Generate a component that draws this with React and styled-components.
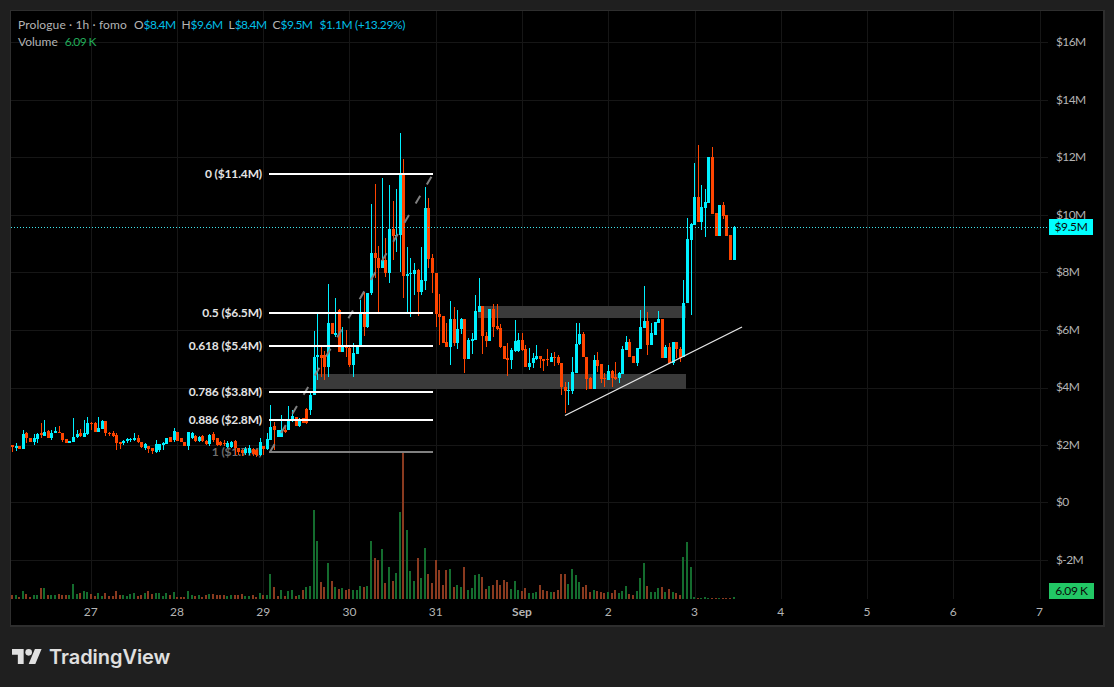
import React from "react";
import styled, { createGlobalStyle } from "styled-components";

const CYAN = "#00f0ff";
const RED = "#ff4500";
const VOL_UP = "#146c2e";
const VOL_DOWN = "#8a3a1f";
const FONT = `Lato, "Noto Sans", "Liberation Sans", sans-serif`;

const GlobalStyle = createGlobalStyle`
  html, body { margin: 0; padding: 0; background: #1f1f1f; }
  body { font-family: ${FONT}; overflow: hidden; }
`;

const Page = styled.div`
  width: 1114px;
  height: 687px;
  padding: 10px 0 0 10px;
  box-sizing: border-box;
  background: #1f1f1f;
  display: flex;
  flex-direction: column;
`;
const Frame = styled.div`
  width: 1095px;
  height: 617px;
  box-sizing: border-box;
  border: 1px solid #2e2e2e;
  border-right-width: 2px;
  border-bottom-width: 2px;
  background: #000;
  position: relative;
  display: flex;
  flex-direction: column;
`;
const ChartRow = styled.div`
  display: flex;
  height: 588px;
`;
const Pane = styled.div`
  position: relative;
  width: 1037px;
  height: 588px;
`;
const ChartSvg = styled.svg`
  display: block;
`;
const Legend = styled.div`
  position: absolute;
  left: 7px;
  top: 5px;
  font-size: 12px;
  line-height: 17px;
  color: #b4b4b4;
  white-space: nowrap;
`;
const LegendRow = styled.div`
  display: flex;
`;
const LegendTitle = styled.span`
  margin-right: 7px;
  letter-spacing: 0.12px;
`;
const Ohlc = styled.span`
  margin-right: 6px;
`;
const Cyan = styled.span`
  color: #00bfe6;
  letter-spacing: ${(p) => p.$spacing ?? -0.6}px;
`;
const Change = styled(Cyan)`
  margin-left: 1px;
`;
const VolumeValue = styled.span`
  color: #22ab5a;
  letter-spacing: -0.6px;
  margin-left: 7px;
`;
const PriceScale = styled.div`
  width: 55px;
  padding-top: 2px;
  display: flex;
  flex-direction: column;
  position: relative;
`;
const PriceTick = styled.div`
  height: 57.5px;
  flex: none;
  display: flex;
  align-items: center;
  padding-left: 8px;
  font-size: 12px;
  letter-spacing: -0.6px;
  color: #b4b4b4;
`;
const Badge = styled.div`
  position: absolute;
  left: 1px;
  top: ${(p) => p.$top}px;
  width: ${(p) => p.$w}px;
  height: 16px;
  background: ${(p) => p.$bg};
  color: #0a0a0a;
  font-size: 12px;
  line-height: 16px;
  letter-spacing: -0.4px;
  text-align: center;
`;
const TimeScale = styled.div`
  display: grid;
  grid-template-columns: repeat(12, 86.27px);
  padding-left: 36.5px;
  height: 26px;
  padding-bottom: 2px;
  box-sizing: border-box;
  align-items: center;
`;
const TimeTick = styled.div`
  text-align: center;
  font-size: 12px;
  color: #b4b4b4;
  font-weight: ${(p) => (p.$strong ? 700 : 400)};
`;
const Footer = styled.div`
  display: flex;
  align-items: center;
  gap: 7px;
  padding: 18px 0 0 2px;
  color: #e0e0e0;
`;
const LogoMark = styled.svg`
  display: block;
  margin-top: -1px;
`;
const Wordmark = styled.span`
  font-family: Inter, "Noto Sans", sans-serif;
  font-size: 20px;
  font-weight: 600;
  line-height: 24px;
  letter-spacing: -0.05px;
`;
const FibText = styled.text`
  font-family: ${FONT};
  font-size: 12px;
  font-weight: 700;
  letter-spacing: -0.15px;
  text-anchor: end;
  fill: ${(p) => p.$fill};
`;

/* left part, read in a 3x crop: [top, bottom, wickTop, wickBottom, signed volume] */
const z = (v) => 400 + v / 3;
const LEFT = [
  [135,142,135,155,-4],[138,145,128,152,4],[138,148,138,148,-2],[103,148,90,148,8],[100,113,95,128,-5],[113,127,113,127,-2],
  [113,127,103,135,4],[103,118,98,130,4],[98,104,70,115,-11],[96,107,60,107,11],[93,113,90,115,-4],[100,115,90,120,4],
  [93,98,80,100,4],[95,100,77,100,-5],[98,120,98,125,-4],[118,128,118,130,-4],[122,129,122,129,4],[110,125,55,125,15],
  [103,110,90,115,5],[100,108,88,110,-6],[100,110,60,112,8],[70,103,50,105,7],[70,73,65,90,-5],[70,95,65,95,-3],
  [85,95,50,95,6],[63,87,60,87,3],[63,100,63,108,-6],[98,102,95,108,-3],[100,108,93,112,-3],[105,130,100,150,-8],
  [127,133,127,147,-4],[122,130,120,135,4],[118,122,113,128,3],[117,120,115,125,5],[115,120,100,122,6],[115,127,105,128,-3],
  [125,140,125,145,-4],[133,145,130,150,6],[137,147,137,160,-8],[145,153,145,162,-5],[133,155,120,158,6],[133,150,133,155,6],
  [130,135,125,150,3],[113,132,113,133,6],[112,125,110,127,-4],[93,120,85,125,7],[97,122,97,122,-2],[115,125,115,125,-2],
  [125,138,125,138,-2],[97,137,95,150,8],[100,115,97,118,4],[108,122,105,125,-3],[110,122,108,125,4],[107,122,105,125,-2],
  [122,132,120,135,-4],[105,133,103,137,5],[103,120,95,125,-5],[115,135,115,137,-4],[125,135,122,137,-4],[128,133,120,137,-4],
  [128,142,122,145,3],[125,140,122,145,4],[122,145,120,165,-4],[145,155,145,165,-4],[150,160,147,168,-5],[148,160,140,165,3],
  [145,158,135,165,3],[148,163,145,168,-4],[150,165,148,170,-2],[125,165,115,168,6],[137,148,137,165,-4],[117,148,100,150,4],
].map(([t, b, wt, wb, v]) => ({ up: v > 0, t: z(t), b: z(b), wt: z(wt), wb: z(wb), v }));

/* from the jump at the 29th on: ["c"|"r", top, bottom, wickTop, wickBottom, signed volume] */
const MAIN = [
  ["c",427,440,405,440,25],["r",426,430,422,450,-12],["c",430,437,430,437,-3],["c",430,437,415,437,9],["r",430,432,427,433,-3],
  ["c",420,430,406,430,8],["c",416,421,410,422,9],["r",417,426,417,426,-3],["c",419,426,418,427,4],["r",418,423,418,423,-9],
  ["r",409,423,408,424,12],["c",395,410,393,415,13],["c",357,395,331,395,89],["c",355,357,312,380,58],["r",355,358,346,377,-17],
  ["r",355,367,351,380,-12],["c",323,367,284,377,36],["r",323,334,323,334,-18],["c",333,335,298,337,12],["r",310,352,309,352,-10],
  ["c",345,352,327,352,11],["r",345,348,330,357,-9],["r",348,365,345,367,-10],["c",353,365,343,377,9],["c",346,354,345,354,9],
  ["c",312,346,300,346,13],["r",312,327,292,336,-12],["c",293,327,293,328,13],["c",253,293,204,295,58],["r",253,258,184,278,-41],
  ["r",258,268,246,312,-39],["c",260,268,178,268,50],["r",260,273,238,277,-16],["c",229,273,185,283,32],["r",229,236,201,260,-18],
  ["c",235,236,189,252,26],["c",173,235,133,272,87],["r",173,276,159,298,-147],["c",274,276,247,313,69],["c",273,274,258,317,28],
  ["c",270,274,263,295,18],["r",270,292,269,316,-41],["c",280,292,247,295,21],["c",208,281,187,290,51],["r",208,259,198,268,-25],
  ["r",258,273,254,293,-16],["r",273,314,273,327,-39],["r",314,317,294,345,-29],["r",316,343,316,343,-14],["r",342,347,323,347,-29],
  ["c",319,347,301,365,30],["r",319,343,307,346,-12],["c",329,343,310,349,14],["c",319,329,318,334,12],["r",319,359,319,373,-32],
  ["c",340,359,338,359,9],["c",339,341,333,354,11],["c",311,340,295,340,24],["c",306,312,278,312,25],["r",306,336,306,354,-22],
  ["r",336,341,332,347,-10],["c",309,341,309,341,13],["r",309,327,304,337,-14],["r",326,329,304,330,-19],["r",328,347,324,348,-14],
  ["r",346,359,346,359,-19],["r",358,360,343,376,-17],["c",350,360,348,369,10],["c",341,351,320,352,18],["c",340,351,333,352,9],
  ["r",340,350,333,351,-8],["r",349,367,345,367,-11],["c",363,367,348,370,6],["c",358,363,353,368,6],["c",356,359,345,360,7],
  ["r",356,359,356,368,-14],["r",359,361,359,371,-9],["r",359,360,349,366,-8],["c",357,362,353,362,7],["r",357,358,352,366,-7],
  ["r",357,363,355,365,-9],["r",363,387,363,395,-25],["r",387,391,382,413,-25],["c",390,391,382,405,15],["c",372,391,357,394,30],
  ["c",344,373,323,373,24],["c",334,344,323,345,17],["r",334,357,332,357,-12],["r",357,379,357,390,-14],["r",378,389,377,389,-7],
  ["c",360,389,355,389,9],["r",360,366,352,372,-8],["r",364,379,364,383,-7],["r",378,379,373,387,-6],["c",371,380,365,380,7],
  ["r",371,378,370,387,-6],["r",377,379,362,380,-9],["c",373,378,372,383,6],["c",349,374,346,374,8],["c",342,350,336,350,13],
  ["r",342,357,339,357,-5],["r",356,363,356,363,-4],["c",348,363,348,366,8],["c",327,349,310,349,21],["c",321,328,286,328,36],
  ["r",321,345,312,355,-13],["c",333,345,323,345,7],["c",322,335,322,335,7],["c",319,323,311,323,11],["r",319,358,319,358,-12],
  ["c",347,358,345,358,7],["r",347,363,343,363,-10],["c",342,363,342,365,7],["r",342,349,342,358,-6],["r",349,358,347,362,-4],
  ["c",303,357,280,357,42],["c",239,303,218,303,57],["c",224,240,223,315,32],["c",197,225,163,225,2],["r",197,222,145,222,-1],
  ["c",207,222,185,230,1],["c",202,208,189,237,2],["c",157,203,157,203,1],["r",157,214,147,214,-1],["r",213,236,213,236,-1],
  ["c",205,236,205,236,1],["r",205,216,202,219,-1],["r",215,236,215,236,-1],["r",235,260,235,260,-1],["c",227,260,226,260,2],
].map(([k, t, b, wt, wb, v]) => ({ up: k === "c", t, b, wt, wb, v }));

const CANDLES = [...LEFT, ...MAIN];
const cx = (i) => 12 + i * 3.59;

const GRID_X = [91, 177, 263, 349, 436, 522, 608, 695, 781, 867, 953, 1040];
const GRID_Y = [42, 100, 157, 215, 272, 330, 388, 445, 502, 560];
const FIB = [
  { y: 174, label: "0 ($11.4M)" },
  { y: 313, label: "0.5 ($6.5M)" },
  { y: 346, label: "0.618 ($5.4M)" },
  { y: 392, label: "0.786 ($3.8M)" },
  { y: 420, label: "0.886 ($2.8M)" },
];
const PRICES = ["$16M", "$14M", "$12M", "$10M", "$8M", "$6M", "$4M", "$2M", "$0", "$-2M"];
const TIMES = ["27", "28", "29", "30", "31", "Sep", "2", "3", "4", "5", "6", "7"];

function Chart() {
  return (
    <ChartSvg width="1037" height="588" viewBox="11 11 1037 588">
      <g shapeRendering="crispEdges">
        {GRID_X.map((x) => (
          <rect key={x} x={x} y="11" width="1" height="588" fill="#161616" />
        ))}
        {GRID_Y.map((y) => (
          <rect key={y} x="11" y={y} width="1037" height="1" fill="#161616" />
        ))}
        <rect x="478" y="306" width="208" height="12" fill="#3a3a3a" />
        <rect x="315" y="374" width="371" height="15" fill="#3a3a3a" />
        {CANDLES.map((c, i) => (
          <rect
            key={i}
            x={Math.round(cx(i)) - 1}
            y={599 - Math.abs(c.v)}
            width="2"
            height={Math.abs(c.v)}
            fill={c.v > 0 ? VOL_UP : VOL_DOWN}
          />
        ))}
      </g>
      <FibText x="262" y="456" $fill="#6e6e6e">1 ($1.7M)</FibText>
      <g shapeRendering="crispEdges">
        {CANDLES.map((c, i) => {
          const col = c.up ? CYAN : RED;
          const x = Math.round(cx(i));
          return (
            <g key={i}>
              <rect x={x} y={c.wt} width="1" height={c.wb - c.wt} fill={col} />
              <rect x={x - 1} y={c.t} width="3" height={Math.max(1, c.b - c.t)} fill={col} />
            </g>
          );
        })}
      </g>
      <line x1="11" x2="1048" y1="227.5" y2="227.5" stroke="#3fe6ee" strokeDasharray="1 2" />
      <line x1="270" y1="452" x2="433" y2="174" stroke="#808080" strokeWidth="2" strokeDasharray="9 13.15" />
      <line x1="565" y1="415.5" x2="742" y2="327" stroke="#e6e6e6" strokeWidth="1.3" />
      <g shapeRendering="crispEdges">
        {FIB.map((f) => (
          <rect key={f.y} x="269" y={f.y - 1} width="164" height="2" fill="#fff" />
        ))}
        <rect x="269" y="451" width="164" height="2" fill="#808080" />
      </g>
      {FIB.map((f) => (
        <FibText key={f.y} x="262" y={f.y + 4} $fill="#e4e4e4">{f.label}</FibText>
      ))}
    </ChartSvg>
  );
}

function Logo() {
  return (
    <LogoMark width="30" height="15" viewBox="0 4 36 18" fill="#e0e0e0" aria-hidden="true">
      <path d="M14 22H7V11H0V4h14v18zM28 22h-8l7.5-18h8L28 22z" />
      <circle cx="20" cy="8" r="4" />
    </LogoMark>
  );
}

export default function App() {
  return (
    <Page>
      <GlobalStyle />
      <Frame>
        <ChartRow>
          <Pane>
            <Chart />
            <Legend>
              <LegendRow>
                <LegendTitle>Prologue · 1h · fomo</LegendTitle>
                <Ohlc>O<Cyan>$8.4M</Cyan></Ohlc>
                <Ohlc>H<Cyan>$9.6M</Cyan></Ohlc>
                <Ohlc>L<Cyan>$8.4M</Cyan></Ohlc>
                <Ohlc>C<Cyan>$9.5M</Cyan></Ohlc>
                <Change $spacing={-0.4}>$1.1M (+13.29%)</Change>
              </LegendRow>
              <LegendRow>
                Volume<VolumeValue>6.09 K</VolumeValue>
              </LegendRow>
            </Legend>
          </Pane>
          <PriceScale>
            {PRICES.map((p) => (
              <PriceTick key={p}>{p}</PriceTick>
            ))}
            <Badge $top={208} $w={44} $bg="#00ffff">$9.5M</Badge>
            <Badge $top={572} $w={45} $bg="#22c765">6.09 K</Badge>
          </PriceScale>
        </ChartRow>
        <TimeScale>
          {TIMES.map((t) => (
            <TimeTick key={t} $strong={t === "Sep"}>{t}</TimeTick>
          ))}
        </TimeScale>
      </Frame>
      <Footer>
        <Logo />
        <Wordmark>TradingView</Wordmark>
      </Footer>
    </Page>
  );
}
